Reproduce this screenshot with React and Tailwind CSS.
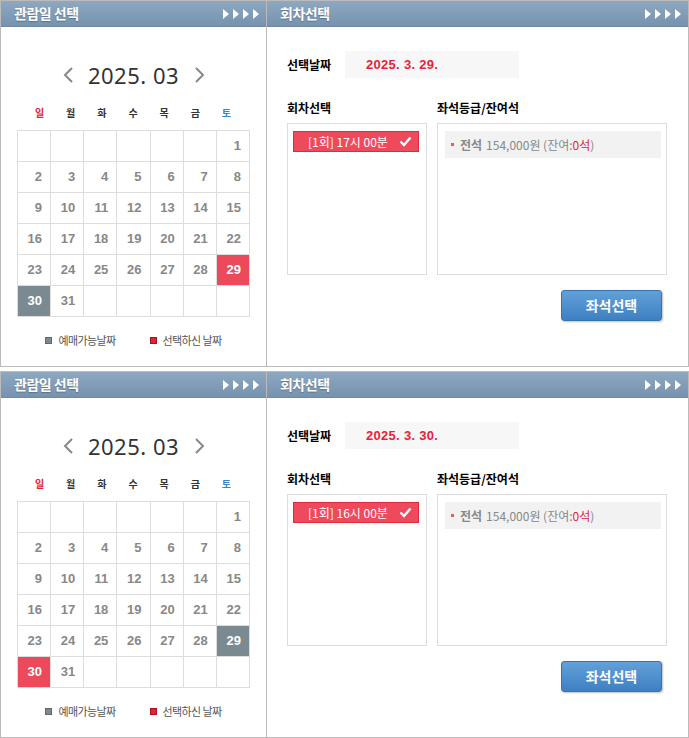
import React from 'react';

const KR = { fontFamily: '"Noto Sans CJK KR", "Noto Sans", sans-serif' };

function Arrows() {
  return (
    <svg width="38" height="10" viewBox="0 0 38 10" className="shrink-0">
      {[0, 10, 20, 30].map((x) => (
        <path key={x} d={`M${x} 0 L${x + 6} 5 L${x} 10 Z`} fill="#fff" />
      ))}
    </svg>
  );
}

function Header({ title }) {
  return (
    <div className="h-[26px] flex items-center justify-between pl-[13px] pr-[5px] bg-gradient-to-b from-[#8ea8c1] to-[#7692ae] border-b border-[#6f89a3]">
      <span className="text-white text-[14px] font-bold tracking-[-0.5px] [text-shadow:0_1px_1px_rgba(0,0,0,0.25)]" style={KR}>
        {title}
      </span>
      <Arrows />
    </div>
  );
}

const rows = [
  [null, null, null, null, null, null, 1],
  [2, 3, 4, 5, 6, 7, 8],
  [9, 10, 11, 12, 13, 14, 15],
  [16, 17, 18, 19, 20, 21, 22],
  [23, 24, 25, 26, 27, 28, 29],
  [30, 31, null, null, null, null, null],
];

const days = ['일', '월', '화', '수', '목', '금', '토'];

function Calendar({ selected, other }) {
  return (
    <div className="w-[266px] shrink-0 border-r border-[#bbb] flex flex-col">
      <Header title="관람일 선택" />
      <div className="mt-[35px] h-[26px] flex items-center justify-center gap-[10px]">
        <svg width="12" height="18" viewBox="0 0 12 18">
          <path d="M10 2 L3 9 L10 16" stroke="#888" strokeWidth="2" fill="none" />
        </svg>
        <span className="text-[22px] text-[#333] tracking-[0.5px] w-[100px] text-center" style={{ fontFamily: '"Noto Sans", sans-serif' }}>
          2025. 03
        </span>
        <svg width="12" height="18" viewBox="0 0 12 18">
          <path d="M2 2 L9 9 L2 16" stroke="#888" strokeWidth="2" fill="none" />
        </svg>
      </div>
      <div className="mt-[17px] ml-[23px] w-[218px] grid grid-cols-7 h-[14px] items-center">
        {days.map((d, i) => (
          <span
            key={d}
            className={`text-center text-[10px] font-bold ${i === 0 ? 'text-[#e5212e]' : i === 6 ? 'text-[#3a86c8]' : 'text-[#333]'}`}
            style={KR}
          >
            {d}
          </span>
        ))}
      </div>
      <table className="mt-[11px] ml-[16px] w-[233px] border-collapse table-fixed">
        <tbody>
          {rows.map((r, ri) => (
            <tr key={ri}>
              {r.map((n, ci) => {
                const isSel = n === selected;
                const isOther = n === other;
                return (
                  <td
                    key={ci}
                    className={`h-[31px] p-0 border border-[#ddd] text-center text-[13px] font-bold ${
                      isSel ? 'bg-[#ec4a5b] text-white' : isOther ? 'bg-[#7b8a91] text-white' : 'text-[#888]'
                    }`}
                    style={{ fontFamily: '"Liberation Sans", sans-serif' }}
                  >
                    {n !== null && <span className="inline-block w-[16px] text-right">{n}</span>}
                  </td>
                );
              })}
            </tr>
          ))}
        </tbody>
      </table>
      <div className="mt-[16px] flex items-center justify-center gap-[34px] h-[14px] text-[11px] tracking-[-0.6px] text-[#555]" style={KR}>
        <span className="flex items-center gap-[6px]">
          <span className="w-[7px] h-[7px] bg-[#7b8a91] border border-[#666]" />
          예매가능날짜
        </span>
        <span className="flex items-center gap-[6px]">
          <span className="w-[7px] h-[7px] bg-[#e5212e] border border-[#a01520]" />
          선택하신 날짜
        </span>
      </div>
    </div>
  );
}

function Session({ date, time }) {
  return (
    <div className="flex-1 flex flex-col">
      <Header title="회차선택" />
      <div className="pl-[20px] pr-[20px]">
        <div className="mt-[24px] flex items-center">
          <span className="w-[58px] text-[12px] font-bold text-black" style={KR}>선택날짜</span>
          <div className="w-[174px] h-[27px] bg-[#f7f7f7] flex items-center pl-[21px]">
            <span className="text-[13px] font-bold text-[#e8213a] tracking-[0.3px]" style={{ fontFamily: '"Liberation Sans", sans-serif' }}>
              {date}
            </span>
          </div>
        </div>
        <div className="mt-[23px] flex gap-[10px] h-[14px] items-center text-[12px] font-bold text-black" style={KR}>
          <span className="w-[140px]">회차선택</span>
          <span>좌석등급/잔여석</span>
        </div>
        <div className="mt-[8px] flex gap-[10px]">
          <div className="w-[140px] h-[152px] border border-[#ddd] pl-[5px] pt-[7px]">
            <div className="w-[126px] h-[21px] bg-[#ee4a5c] border border-[#dc2a3e] flex items-center justify-between pl-[14px] pr-[6px]">
              <span className="text-white text-[12px]" style={KR}>{`[1회] ${time} 00분`}</span>
              <svg width="13" height="11" viewBox="0 0 13 11">
                <path d="M1.5 5.5 L5 9 L11.5 1.5" stroke="#fff" strokeWidth="2.4" fill="none" />
              </svg>
            </div>
          </div>
          <div className="w-[230px] h-[152px] border border-[#ddd] pl-[7px] pr-[5px] pt-[7px]">
            <div className="h-[27px] bg-[#f2f2f2] flex items-center pl-[6px] text-[12px] text-[#888]" style={KR}>
              <span className="w-[3px] h-[3px] bg-[#e8596a] mr-[6px]" />
              <span className="font-bold text-[#888] mr-[4px]">전석</span>
              154,000원 (잔여:<span className="text-[#e8213a]">0석</span>)
            </div>
          </div>
        </div>
        <div className="mt-[15px] flex justify-end pr-[6px]">
          <button
            type="button"
            className="w-[101px] h-[31px] rounded-[3px] bg-gradient-to-b from-[#62a0d9] to-[#3d80c2] border border-[#3973ad] shadow-[1px_1px_2px_rgba(0,0,0,0.25)] text-white text-[14px] font-bold"
            style={KR}
          >
            좌석선택
          </button>
        </div>
      </div>
    </div>
  );
}

function Block({ selected, other, date, time }) {
  return (
    <div className="w-[689px] h-[367px] border border-[#bbb] flex bg-white">
      <Calendar selected={selected} other={other} />
      <Session date={date} time={time} />
    </div>
  );
}

export default function App() {
  return (
    <div className="w-[689px] bg-white flex flex-col gap-[4px]">
      <Block selected={29} other={30} date="2025.  3.  29." time="17시" />
      <Block selected={30} other={29} date="2025.  3.  30." time="16시" />
    </div>
  );
}
